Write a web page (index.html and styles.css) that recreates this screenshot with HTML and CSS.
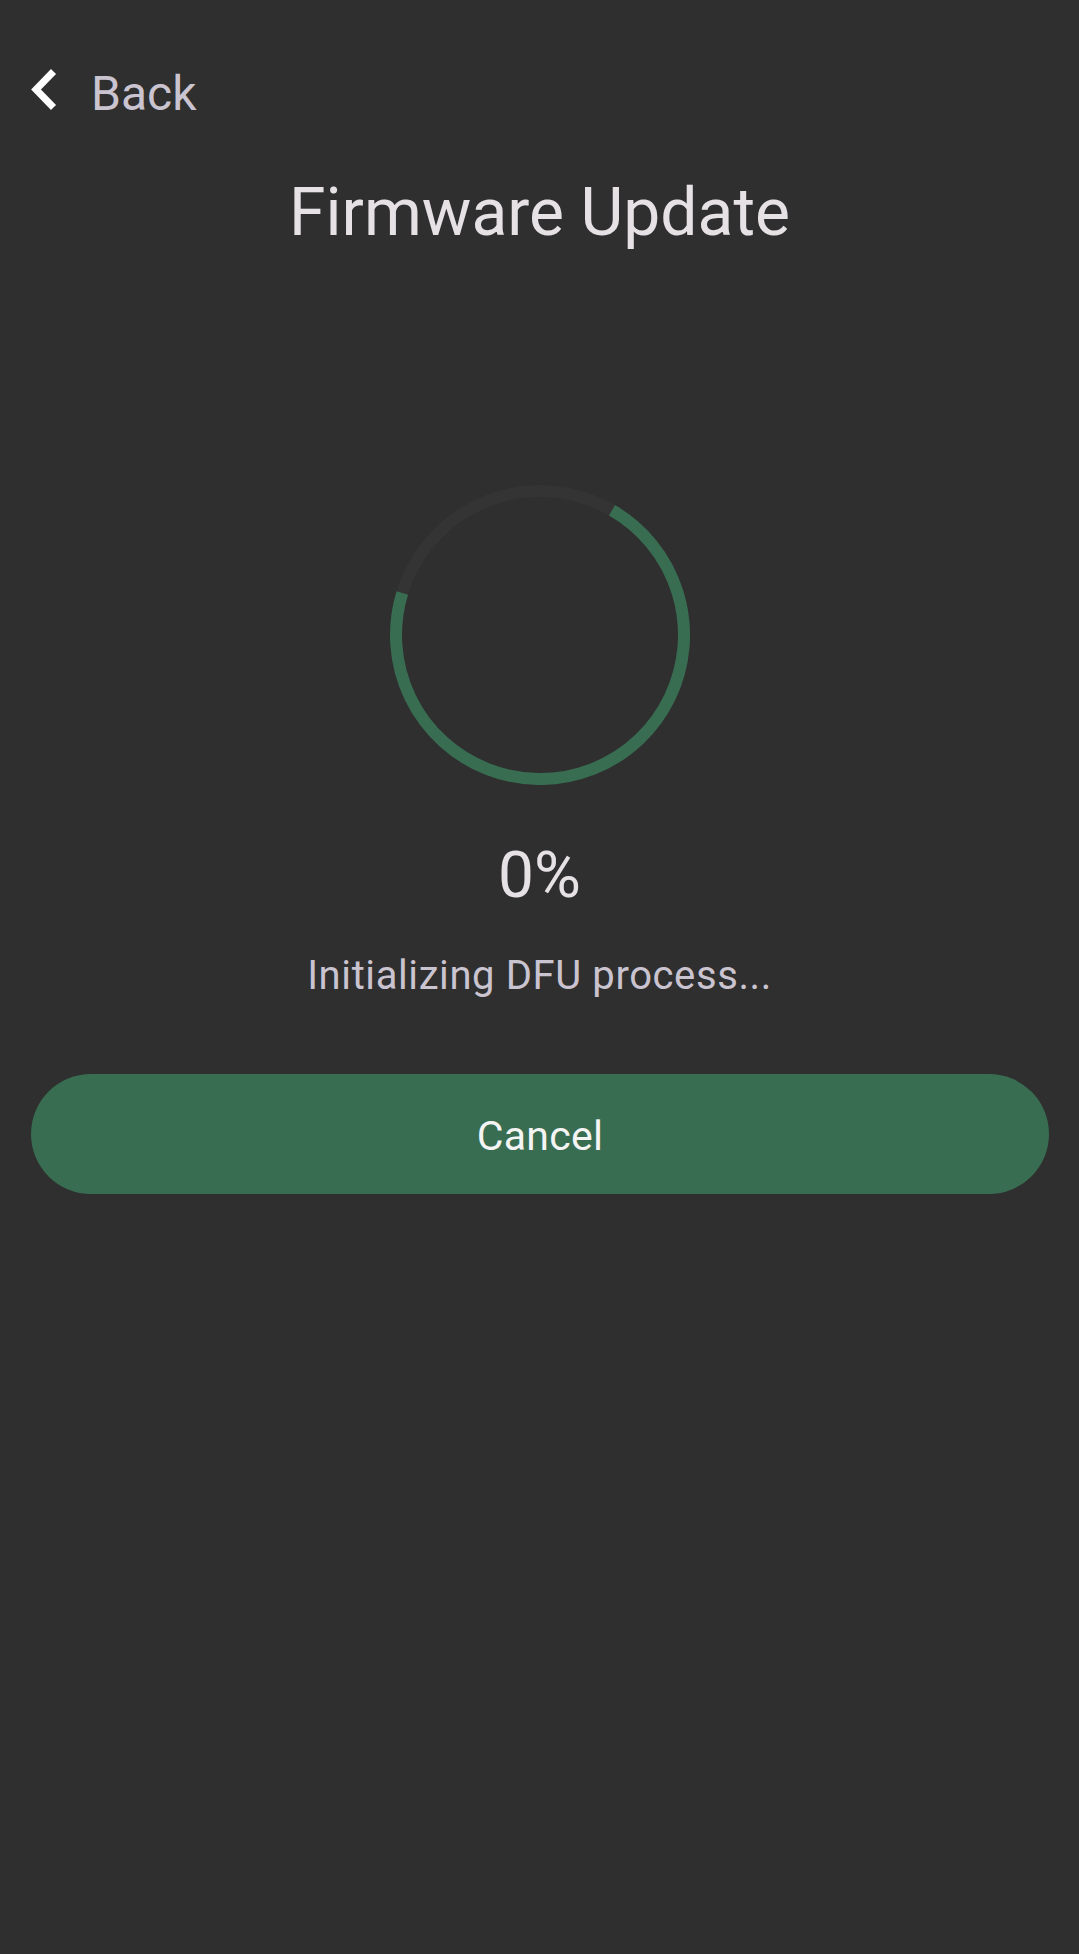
FILE: index.html
```html
<!DOCTYPE html>
<html lang="en">
<head>
<meta charset="utf-8">
<title>Firmware Update</title>
<link rel="stylesheet" href="styles.css">
</head>
<body>
<div class="screen">
  <div class="topbar">
    <svg class="chevron" width="27" height="43" viewBox="0 0 27 43" aria-hidden="true">
      <path d="M23.5 3.5 L6 21.5 L23.5 39.5" fill="none" stroke="#ffffff" stroke-width="7" stroke-linejoin="miter"/>
    </svg>
    <span class="back-label">Back</span>
  </div>
  <h1 class="title">Firmware Update</h1>
  <svg class="progress" width="300" height="300" viewBox="0 0 300 300" aria-hidden="true">
    <circle cx="150" cy="150" r="144" fill="none" stroke="#343434" stroke-width="12"/>
    <path d="M222 25.3 A144 144 0 1 1 12.3 107.9" fill="none" stroke="#386d52" stroke-width="12"/>
  </svg>
  <div class="percent">0%</div>
  <div class="status">Initializing DFU process...</div>
  <button class="cancel" type="button">Cancel</button>
</div>
</body>
</html>
```
FILE: styles.css
```css
html, body {
  margin: 0;
  padding: 0;
  background: #2f2f2f;
}
body {
  width: 1079px;
  min-height: 1954px;
  font-family: Roboto, "Noto Sans", "Liberation Sans", sans-serif;
}
.screen {
  display: flex;
  flex-direction: column;
  align-items: center;
}
.topbar {
  align-self: stretch;
  display: flex;
  align-items: center;
  height: 48px;
  margin-top: 70px;
  padding-left: 30px;
}
.chevron {
  flex: none;
  margin-bottom: 9px;
}
.back-label {
  margin-left: 34px;
  font-size: 48px;
  line-height: 48px;
  color: #cac4d0;
}
.title {
  margin: 55px 0 0;
  font-size: 66px;
  font-weight: 400;
  line-height: 80px;
  color: #e6e1e5;
}
.progress {
  display: block;
  margin-top: 232px;
}
.percent {
  margin-top: 59px;
  font-size: 64px;
  line-height: 64px;
  color: #e6e1e5;
}
.status {
  margin-top: 44px;
  font-size: 40px;
  line-height: 48px;
  letter-spacing: 0.6px;
  color: #cac4d0;
}
.cancel {
  align-self: stretch;
  margin: 74px 30px 0 31px;
  height: 120px;
  padding: 4px 0 0;
  border: none;
  border-radius: 60px;
  background: #386d52;
  color: #f4f4f4;
  font-family: Roboto, "Noto Sans", "Liberation Sans", sans-serif;
  font-size: 41px;
  line-height: 48px;
  letter-spacing: 0.3px;
}
```
